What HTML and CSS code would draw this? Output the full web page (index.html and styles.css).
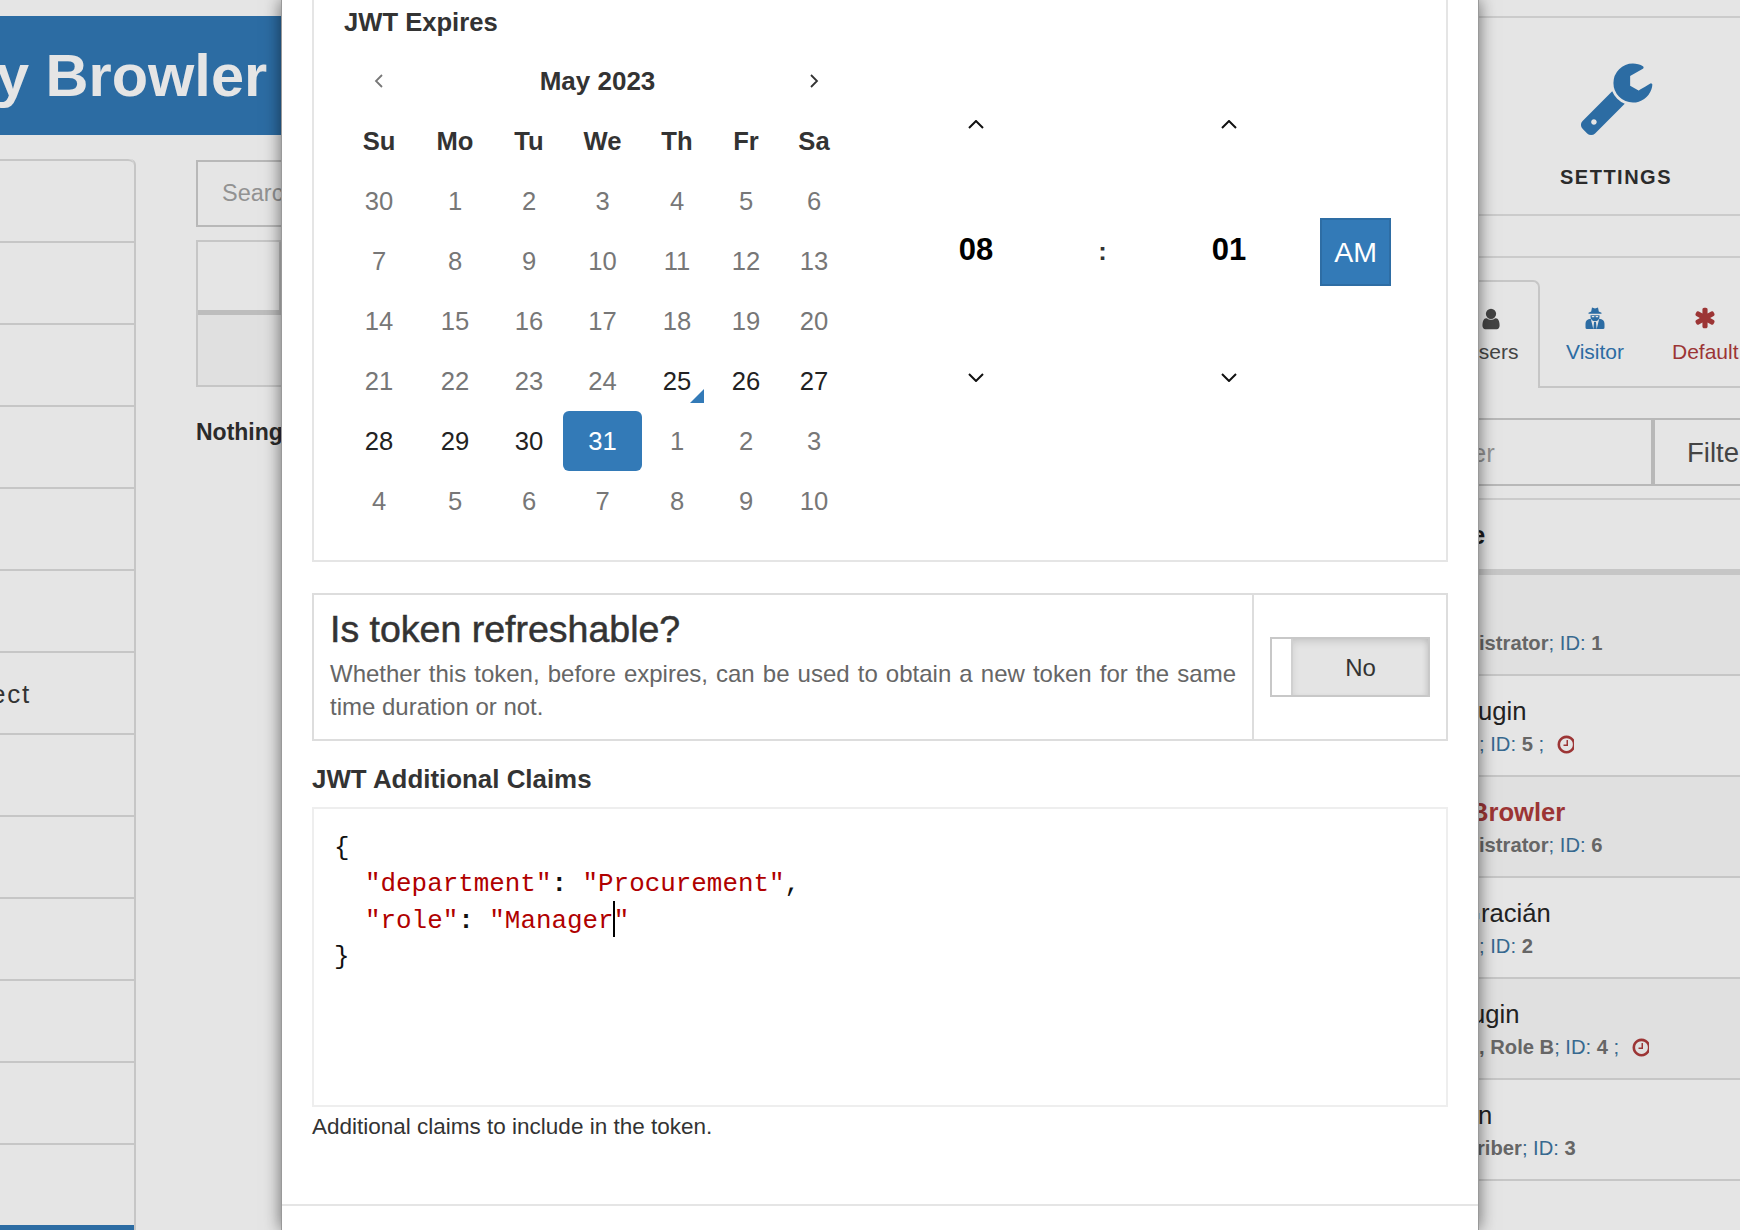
FILE: index.html
```html
<!DOCTYPE html>
<html lang="en">
<head>
<meta charset="utf-8">
<title>JWT Expires</title>
<link rel="stylesheet" href="styles.css">
</head>
<body>
<div class="page">
  <div class="main">
    <header class="banner"><h1>y Browler</h1></header>
    <div class="main-body">
      <nav class="nav">
        <div class="nav-item"></div><div class="nav-item"></div><div class="nav-item"></div>
        <div class="nav-item"></div><div class="nav-item"></div><div class="nav-item"></div>
        <div class="nav-item"><span class="nav-text">ect</span></div>
        <div class="nav-item"></div><div class="nav-item"></div><div class="nav-item"></div>
        <div class="nav-item"></div><div class="nav-item"></div><div class="nav-item"></div>
        <div class="nav-item nav-active"></div>
      </nav>
      <section class="content">
        <div class="search">Search</div>
        <div class="tbl">
          <div class="tbl-head"><div class="tbl-cell"></div></div>
          <div class="tbl-row"></div>
        </div>
        <p class="nothing">Nothing</p>
      </section>
    </div>
  </div>

  <aside class="side">
    <div class="settings">
      <svg class="wrench" viewBox="0 0 1792 1792"><path d="M384 1472q0-26-19-45t-45-19-45 19-19 45 19 45 45 19 45-19 19-45zm644-420l-682 682q-37 37-90 37-52 0-91-37l-106-108q-38-36-38-90 0-53 38-91l681-681q39 98 114.5 173.5t173.5 114.5zm634-435q0 39-23 106-47 134-164.5 217.5t-258.5 83.5q-185 0-316.5-131.5t-131.5-316.5 131.5-316.5 316.5-131.5q58 0 121.5 16.5t107.5 46.5q16 11 16 28t-16 28l-293 169v224l193 107q5-3 79-48.5t135.5-81 70.5-35.5q15 0 23.5 10t8.5 25z"/></svg>
      <div class="settings-label">SETTINGS</div>
    </div>
    <div class="spacer-line"></div>
    <div class="tabs">
      <div class="tab tab-active">
        <svg class="tab-icon" viewBox="0 0 1792 1792"><path d="M1536 1399q0 109-62.5 187t-150.5 78h-854q-88 0-150.5-78t-62.5-187q0-85 8.5-160.5t31.5-152 58.5-131 94-89 134.5-34.5q131 128 313 128t313-128q76 0 134.5 34.5t94 89 58.5 131 31.5 152 8.5 160.5zm-256-887q0 159-112.5 271.5t-271.5 112.5-271.5-112.5-112.5-271.5 112.5-271.5 271.5-112.5 271.5 112.5 112.5 271.5z"/></svg>
        <span>Users</span>
      </div>
      <div class="tab tab-visitor">
        <svg class="tab-icon" viewBox="0 0 24 24"><path d="M8.2 5.6 9 1.6l3 .9 3-.9.8 4 2.7 1.2v1H5.500v-1z"/><path fill-rule="evenodd" d="M7.500 9.300h9v1.500a4.500 4.500 0 0 1-9 0zM8.800 10v1.300h2.500V10zm3.900 0v1.300h2.500V10z"/><path d="M2.500 21.500v-3.800c0-2.700 1.800-4.500 5.300-4.900L10.300 23H4a1.500 1.500 0 0 1-1.500-1.500zM21.500 21.500v-3.800c0-2.700-1.800-4.500-5.300-4.900L13.700 23H20a1.500 1.500 0 0 0 1.500-1.500zM11 16h2l.6 7h-3.200z"/></svg>
        <span>Visitor</span>
      </div>
      <div class="tab tab-default">
        <svg class="tab-icon" viewBox="0 0 1792 1792"><path d="M1546 1050q46 26 59.500 77.500t-12.500 97.500l-64 110q-26 46-77.500 59.500t-97.500-12.500l-266-153v307q0 52-38 90t-90 38h-128q-52 0-90-38t-38-90v-307l-266 153q-46 26-97.500 12.500t-77.500-59.500l-64-110q-26-46-12.500-97.500t59.500-77.500l266-154-266-154q-46-26-59.500-77.500t12.500-97.500l64-110q26-46 77.500-59.500t97.500 12.500l266 153v-307q0-52 38-90t90-38h128q52 0 90 38t38 90v307l266-153q46-26 97.500-12.500t77.500 59.500l64 110q26 46 12.500 97.500t-59.500 77.500l-266 154z"/></svg>
        <span>Default</span>
      </div>
    </div>
    <div class="filter">
      <div class="filter-input"><span>er</span></div>
      <div class="filter-btn">Filter</div>
    </div>
    <div class="list-head"><span>e</span></div>
    <ul class="users">
      <li class="user user-odd">
        <div class="name"></div>
        <div class="sub sub-a"><b>istrator</b><i>; ID: </i><b>1</b></div>
      </li>
      <li class="user">
        <div class="name name-b">ugin</div>
        <div class="sub sub-a"><i>; ID: </i><b>5</b><i> ;</i>
          <svg class="clock" viewBox="0 0 1536 1792"><path d="M1024 544v448q0 14-9 23t-23 9h-320q-14 0-23-9t-9-23v-64q0-14 9-23t23-9h224v-352q0-14 9-23t23-9h64q14 0 23 9t9 23zm416 352q0-148-73-273t-198-198-273-73-273 73-198 198-73 273 73 273 198 198 273 73 273-73 198-198 73-273zm224 0q0 209-103 385.500t-279.500 279.500-385.500 103-385.500-103-279.500-279.500-103-385.500 103-385.500 279.500-279.500 385.500-103 385.500 103 279.500 279.500 103 385.500z"/></svg>
        </div>
      </li>
      <li class="user user-odd">
        <div class="name name-red">Browler</div>
        <div class="sub sub-a"><b>istrator</b><i>; ID: </i><b>6</b></div>
      </li>
      <li class="user">
        <div class="name name-g">Gracián</div>
        <div class="sub sub-a"><i>; ID: </i><b>2</b></div>
      </li>
      <li class="user user-odd">
        <div class="name name-e">ugin</div>
        <div class="sub sub-a"><b>, Role B</b><i>; ID: </i><b>4</b><i> ;</i>
          <svg class="clock" viewBox="0 0 1536 1792"><path d="M1024 544v448q0 14-9 23t-23 9h-320q-14 0-23-9t-9-23v-64q0-14 9-23t23-9h224v-352q0-14 9-23t23-9h64q14 0 23 9t9 23zm416 352q0-148-73-273t-198-198-273-73-273 73-198 198-73 273 73 273 198 198 273 73 273-73 198-198 73-273zm224 0q0 209-103 385.500t-279.500 279.500-385.500 103-385.500-103-279.500-279.500-103-385.500 103-385.500 279.500-279.500 385.500-103 385.500 103 279.500 279.500 103 385.500z"/></svg>
        </div>
      </li>
      <li class="user">
        <div class="name name-b">n</div>
        <div class="sub sub-f"><b>riber</b><i>; ID: </i><b>3</b></div>
      </li>
    </ul>
  </aside>

  <div class="modal">
    <div class="modal-body">
      <div class="expires">
        <div class="field-label">JWT Expires</div>
        <div class="picker">
          <div class="calendar">
            <div class="cal-nav"><svg class="arrow" viewBox="0 0 10 16"><path d="M8 2 2 8l6 6"/></svg></div>
            <div class="cal-month">May 2023</div>
            <div class="cal-nav cal-next"><svg class="arrow" viewBox="0 0 10 16"><path d="m2 2 6 6-6 6"/></svg></div>
            <div class="wd">Su</div><div class="wd">Mo</div><div class="wd">Tu</div><div class="wd">We</div><div class="wd">Th</div><div class="wd">Fr</div><div class="wd">Sa</div>
            <div class="d">30</div><div class="d">1</div><div class="d">2</div><div class="d">3</div><div class="d">4</div><div class="d">5</div><div class="d">6</div>
            <div class="d">7</div><div class="d">8</div><div class="d">9</div><div class="d">10</div><div class="d">11</div><div class="d">12</div><div class="d">13</div>
            <div class="d">14</div><div class="d">15</div><div class="d">16</div><div class="d">17</div><div class="d">18</div><div class="d">19</div><div class="d">20</div>
            <div class="d">21</div><div class="d">22</div><div class="d">23</div><div class="d">24</div><div class="d on today">25</div><div class="d on">26</div><div class="d on">27</div>
            <div class="d on">28</div><div class="d on">29</div><div class="d on">30</div><div class="d sel">31</div><div class="d">1</div><div class="d">2</div><div class="d">3</div>
            <div class="d">4</div><div class="d">5</div><div class="d">6</div><div class="d">7</div><div class="d">8</div><div class="d">9</div><div class="d">10</div>
          </div>
          <div class="time">
            <div class="t-arrow"><svg class="chev" viewBox="0 0 16 9"><path d="m1 8 7-7 7 7"/></svg></div>
            <div></div>
            <div class="t-arrow"><svg class="chev" viewBox="0 0 16 9"><path d="m1 8 7-7 7 7"/></svg></div>
            <div></div>
            <div class="t-val">08</div>
            <div class="t-sep">:</div>
            <div class="t-val">01</div>
            <div class="t-ampm">AM</div>
            <div class="t-arrow"><svg class="chev" viewBox="0 0 16 9"><path d="m1 1 7 7 7-7"/></svg></div>
            <div></div>
            <div class="t-arrow"><svg class="chev" viewBox="0 0 16 9"><path d="m1 1 7 7 7-7"/></svg></div>
            <div></div>
          </div>
        </div>
      </div>

      <div class="refresh">
        <div class="refresh-text">
          <h3>Is token refreshable?</h3>
          <p>Whether this token, before expires, can be used to obtain a new token for the same time duration or not.</p>
        </div>
        <div class="refresh-switch">
          <div class="toggle"><div class="toggle-handle"></div><div class="toggle-off">No</div></div>
        </div>
      </div>

      <div class="field-label claims-label">JWT Additional Claims</div>
      <div class="editor"><div class="ln">{</div><div class="ln ind"><span class="str">"department"</span><b>:</b> <span class="str">"Procurement"</span>,</div><div class="ln ind"><span class="str">"role"</span><b>:</b> <span class="str">"Manager<span class="caret"></span>"</span></div><div class="ln">}</div></div>
      <div class="hint">Additional claims to include in the token.</div>
    </div>
    <div class="modal-footer"></div>
  </div>
</div>
</body>
</html>
```
FILE: styles.css
```css
* { box-sizing: border-box; }
html, body { margin: 0; padding: 0; overflow: hidden; }
body { font-family: "Liberation Sans", Arial, sans-serif; font-size: 25.6px; color: #333; background: #e5e5e5; }
p, h1, h3, ul { margin: 0; padding: 0; }
.page { position: relative; display: flex; width: 1740px; height: 1230px; overflow: hidden; background: #e5e5e5; }

/* left page behind the dialog */
.main { flex: none; width: 1440px; }
.banner { margin-top: 16px; height: 119px; background: #2c6ca3; overflow: hidden; }
.banner h1 { margin-left: -4px; font-size: 59.5px; line-height: 119px; font-weight: 700; color: #e5e5e5; white-space: nowrap; }
.main-body { display: flex; padding-top: 24px; }
.nav { flex: none; width: 136px; border-right: 2px solid #c6c6c6; border-top-right-radius: 6px; }
.nav-item { display: flex; align-items: center; height: 82px; border-top: 2px solid #c6c6c6; }
.nav-item:first-child { border-top-right-radius: 6px; }
.nav-text { margin: 2px 0 0 -9px; font-size: 26px; letter-spacing: 1.8px; color: #333; }
.nav-active { background: #2c6ca3; border-top-color: #2c6ca3; }
.content { flex: 1; margin-left: 60px; padding-top: 1px; }
.search { display: flex; align-items: center; height: 67px; padding-left: 24px; border: 2px solid #b8b8b8; font-size: 23.5px; color: #929292; }
.tbl { margin-top: 13px; border-left: 2px solid #c6c6c6; border-top: 2px solid #c6c6c6; border-bottom: 2px solid #c6c6c6; }
.tbl-head { height: 73px; border-bottom: 5px solid #bdbdbd; }
.tbl-cell { width: 83px; height: 100%; border-right: 2px solid #c0c0c0; }
.tbl-row { height: 70px; background: #e0e0e0; }
.nothing { margin-top: 27px; font-size: 23px; font-weight: 700; line-height: 36px; color: #2b2b2b; white-space: nowrap; }

/* right page behind the dialog */
.side { flex: 1; min-width: 0; padding-top: 16px; }
.settings { display: flex; flex-direction: column; align-items: center; height: 200px; padding: 40px 0 0 52px; border-top: 2px solid #cbcbcb; border-bottom: 2px solid #cbcbcb; }
.wrench { display: block; flex: none; width: 78px; height: 78px; margin-left: 6px; fill: #2c6ca3; }
.settings-label { margin-top: 29px; font-size: 20px; line-height: 24px; font-weight: 700; letter-spacing: 1.5px; color: #2b2b2b; }
.spacer-line { height: 42px; border-bottom: 2px solid #cbcbcb; }
.tabs { display: flex; margin-top: 22px; height: 108px; }
.tab { flex: none; display: flex; flex-direction: column; align-items: center; padding: 26px 25px 0; font-size: 21px; border-bottom: 2px solid #c6c6c6; white-space: nowrap; }
.tab span { margin-top: 7px; line-height: 30px; }
.tab-icon { display: block; flex: none; width: 24px; height: 24px; fill: currentColor; }
.tab-active { width: 100px; padding: 25px 0 0 4px; border: 2px solid #c6c6c6; border-left: 0; border-bottom: 0; border-top-right-radius: 7px; color: #444; }
.tab-active span { margin-top: 6px; }
.tab-visitor { padding-left: 26px; padding-right: 23px; color: #2c6ca3; }
.tab-default { color: #9c3535; }
.filter { display: flex; margin-top: 30px; height: 68px; border-top: 2px solid #b8b8b8; border-bottom: 2px solid #b8b8b8; }
.filter-input { flex: none; width: 215px; display: flex; align-items: center; padding: 2px 0 0 32px; border-right: 4px solid #b8b8b8; color: #929292; }
.filter-btn { display: flex; align-items: center; padding: 2px 0 0 32px; font-size: 27.5px; color: #444; white-space: nowrap; }
.list-head { display: flex; align-items: center; margin-top: 12px; height: 77px; padding: 2px 0 0 31px; border-top: 2px solid #cbcbcb; border-bottom: 6px solid #c6c6c6; font-weight: 700; color: #1c1c1c; }
.users { list-style: none; }
.user { height: 101px; padding-top: 18px; border-bottom: 2px solid #c6c6c6; }
.user-odd { background: #e0e0e0; }
.name { height: 34px; line-height: 35px; color: #222; white-space: nowrap; }
.name-b { margin-left: 38px; }
.name-e { margin-left: 31px; }
.name-g { margin-left: 21px; }
.name-red { margin-left: 30px; font-weight: 700; color: #9c3535; }
.sub { display: flex; align-items: center; height: 32px; font-size: 20.2px; line-height: 32px; white-space: pre; }
.sub-a { margin-left: 39px; }
.sub-f { margin-left: 37px; }
.sub b { font-weight: 700; color: #666; }
.sub i { font-style: normal; color: #37698f; }
.clock { flex: none; width: 18px; height: 21px; margin-left: 12px; fill: #9c3535; }

/* dialog */
.modal { position: absolute; left: 281px; top: 0; width: 1198px; height: 1230px; background: #fff; border-left: 1px solid #999; border-right: 1px solid #999; box-shadow: 0 0 16px rgba(0, 0, 0, .55); }
.modal-body { padding: 0 30px; height: 1204px; overflow: hidden; }
.modal-footer { height: 26px; border-top: 2px solid #e5e5e5; }
.expires { height: 562px; padding: 4px 0 0 30px; border: 2px solid #e5e5e5; border-top: 0; }
.field-label { font-weight: 700; line-height: 36px; color: #333; }
.picker { display: flex; margin: 11px 0 0 -1px; }
.calendar { flex: none; display: grid; grid-template-columns: 72px 80px 68px 79px 70px 68px 68px; grid-auto-rows: 60px; }
.cal-nav { display: flex; align-items: center; justify-content: center; color: #777; }
.cal-next { color: #333; }
.arrow { width: 10px; height: 16px; fill: none; stroke: currentColor; stroke-width: 1.800; }
.cal-month { grid-column: 2 / 7; display: flex; align-items: center; justify-content: center; font-size: 26px; font-weight: 700; color: #333; }
.wd { display: flex; align-items: center; justify-content: center; font-weight: 700; color: #333; }
.d { position: relative; display: flex; align-items: center; justify-content: center; color: #777; }
.on { color: #222; }
.sel { color: #fff; background: #337ab7; border-radius: 6px; }
.today::after { content: ""; position: absolute; right: 8px; bottom: 8px; border-left: 14px solid transparent; border-bottom: 14px solid #337ab7; }
.time { flex: none; display: grid; grid-template-columns: 112px 141px 112px 106px; grid-template-rows: 60px 189px 68px; margin: 43px 0 0 72px; color: #000; }
.t-arrow { display: flex; align-items: center; justify-content: center; }
.chev { width: 16px; height: 9px; fill: none; stroke: #111; stroke-width: 2; }
.t-val { display: flex; align-items: center; justify-content: center; padding-top: 2px; font-size: 31px; font-weight: 700; color: #000; }
.t-sep { display: flex; align-items: center; justify-content: center; padding-top: 6px; font-weight: 700; color: #333; }
.t-ampm { display: flex; align-items: center; justify-content: center; width: 71px; height: 68px; margin: 64px 0 0 35px; font-size: 28.5px; color: #fff; background: #337ab7; border: 2px solid #2e6da4; }
.refresh { display: flex; margin-top: 31px; height: 148px; border: 2px solid #ddd; }
.refresh-text { flex: none; width: 940px; padding: 12px 16px 0 16px; border-right: 2px solid #ddd; }
.refresh-text h3 { font-size: 37.5px; line-height: 45px; font-weight: 400; color: #333; -webkit-text-stroke: .5px #333; }
.refresh-text p { margin-top: 5px; font-size: 24px; line-height: 33px; color: #666; text-align: justify; }
.refresh-switch { flex: 1; display: flex; align-items: center; padding-left: 16px; }
.toggle { display: flex; width: 160px; height: 60px; border: 2px solid #c8c8c8; }
.toggle-handle { flex: none; width: 21px; background: #fff; border-right: 2px solid #d0d0d0; }
.toggle-off { flex: 1; display: flex; align-items: center; justify-content: center; padding-top: 1px; font-size: 24px; color: #333; background: #e4e4e4; box-shadow: inset 0 4px 8px -2px rgba(0, 0, 0, .14), inset -4px 0 6px -3px rgba(0, 0, 0, .08); }
.claims-label { margin-top: 20px; font-size: 25.9px; }
.editor { margin-top: 10px; height: 300px; padding: 21px 0 0 20px; border: 2px solid #eee; font-family: "Liberation Mono", "Courier New", monospace; font-size: 25.9px; line-height: 36.3px; color: #111; white-space: pre; }
.ln { height: 36.3px; }
.ind { padding-left: 31px; }
.str { color: #b00000; }
.editor b { font-weight: 700; }
.caret { position: relative; display: inline-block; width: 0; height: 0; }
.caret::after { content: ""; position: absolute; left: -1px; bottom: -9px; width: 2px; height: 36px; background: #000; }
.hint { margin-top: 4px; font-size: 22.5px; line-height: 32px; color: #333; }
```
